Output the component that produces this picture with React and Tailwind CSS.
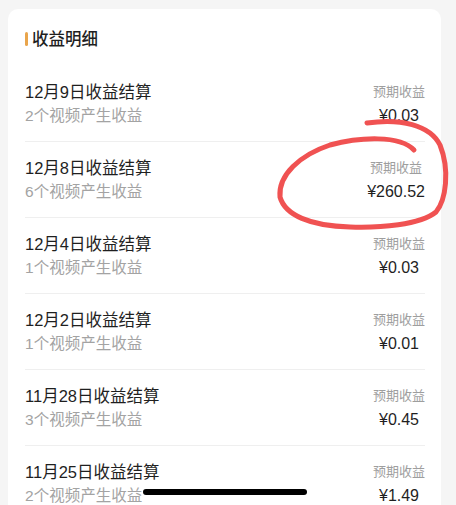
import React from 'react';

const records = [
  { date: '12月9日', count: 2, amount: '0.03' },
  { date: '12月8日', count: 6, amount: '260.52' },
  { date: '12月4日', count: 1, amount: '0.03' },
  { date: '12月2日', count: 1, amount: '0.01' },
  { date: '11月28日', count: 3, amount: '0.45' },
  { date: '11月25日', count: 2, amount: '1.49' },
];

const RecordRow = ({ item, last }) => (
  <div className={`flex items-center justify-between pt-[14px] pb-[13px] ${last ? '' : 'border-b border-[#efefef]'}`}>
    <div className="flex flex-col">
      <span className="text-[16.5px] leading-[24px] text-[#1f1f1f]">{item.date}收益结算</span>
      <span className="text-[15.5px] leading-[24px] text-[#a3a3a3]">{item.count}个视频产生收益</span>
    </div>
    <div className="flex flex-col items-center">
      <span className="text-[13px] leading-[24px] text-[#9e9e9e]">预期收益</span>
      <span className="text-[16px] leading-[24px] text-[#1f1f1f]">¥{item.amount}</span>
    </div>
  </div>
);

export default function App() {
  return (
    <div
      className="relative h-[505px] w-[456px] overflow-hidden bg-[#f5f5f5] pl-[8px] pr-[15px] pt-[9px]"
      style={{ fontFamily: '"Liberation Sans", "Noto Sans CJK SC", sans-serif' }}
    >
      <div className="rounded-[10px] bg-white px-[16px] pl-[17px] pt-[18px]">
        <div className="flex h-[24px] items-center gap-[4px]">
          <span className="h-[14px] w-[3px] rounded-full bg-[#e9a54c]" />
          <span className="text-[16.5px] font-medium text-[#1f1f1f]">收益明细</span>
        </div>
        <div className="mt-[15px]">
          {records.map((item, i) => (
            <RecordRow key={item.date} item={item} last={i === records.length - 1} />
          ))}
        </div>
      </div>

      {/* hand-drawn annotation */}
      <svg className="pointer-events-none absolute left-0 top-0" width="456" height="505">
        <path
          d="M367,123 C400,118 430,125 440,145 C450,170 446,200 436,212 C420,225 380,228 350,227 C310,226 285,215 280,197 C278,175 300,155 330,145 C360,137 400,135 414,150"
          fill="none"
          stroke="#f05252"
          strokeWidth="5"
          strokeLinecap="round"
        />
      </svg>

      {/* home indicator */}
      <div className="absolute left-[143px] top-[489px] h-[6px] w-[164px] rounded-full bg-black" />
    </div>
  );
}
